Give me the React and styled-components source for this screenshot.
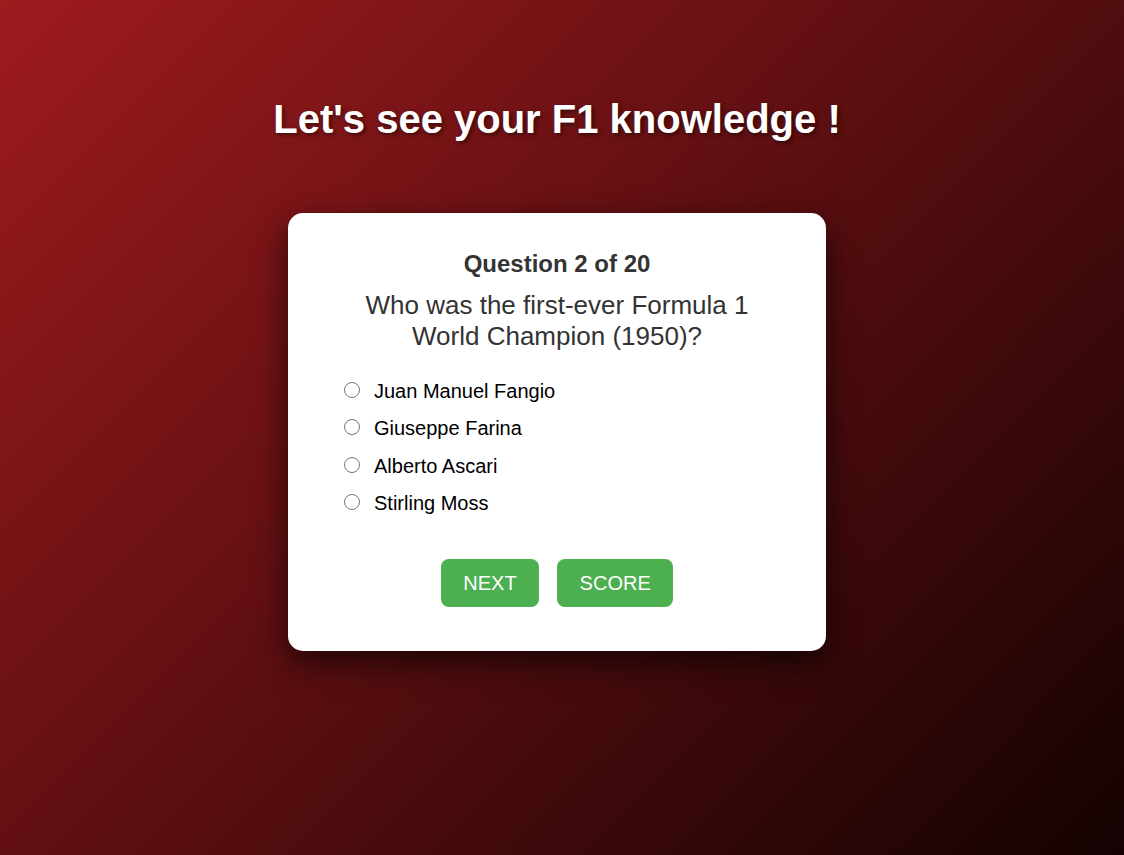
import styled, { createGlobalStyle } from "styled-components";

const GlobalStyle = createGlobalStyle`
  html, body {
    margin: 0;
    padding: 0;
  }
  body {
    font-family: "Liberation Sans", Arial, sans-serif;
  }
`;

const Page = styled.div`
  min-height: 100vh;
  box-sizing: border-box;
  padding: 97px 10px 40px 0;
  background: linear-gradient(135deg, #9e1b1e 0%, #5a0e10 50%, #140202 100%);
  display: flex;
  flex-direction: column;
  align-items: center;
`;

const Title = styled.h1`
  margin: 0 0 71px;
  color: #fff;
  font-size: 40px;
  font-weight: bold;
  text-shadow: 2px 2px 4px rgba(0, 0, 0, 0.5);
`;

const Card = styled.div`
  width: 538px;
  box-sizing: border-box;
  padding: 37px 50px 44px;
  background: #fff;
  border-radius: 15px;
  box-shadow: 0 12px 32px rgba(0, 0, 0, 0.65);
`;

const Counter = styled.h2`
  margin: 0 0 12px;
  text-align: center;
  font-size: 24px;
  font-weight: bold;
  color: #333;
`;

const Question = styled.p`
  margin: 0 0 20.5px;
  text-align: center;
  font-size: 26px;
  line-height: 31px;
  color: #333;
`;

const Options = styled.div`
  display: flex;
  flex-direction: column;
`;

const Option = styled.label`
  display: flex;
  align-items: center;
  padding: 7px 0;
  line-height: 23.5px;
  font-size: 20px;
  color: #000;
  cursor: pointer;
`;

const Radio = styled.input`
  width: 16px;
  height: 16px;
  margin: -3px 14px 0 6px;
`;

const Actions = styled.div`
  display: flex;
  justify-content: center;
  gap: 18px;
  margin-top: 36.5px;
`;

const Button = styled.button`
  padding: 12px 22.5px;
  line-height: 24px;
  font-family: inherit;
  font-size: 20px;
  color: #fff;
  background-color: #4caf50;
  border: none;
  border-radius: 8px;
  cursor: pointer;
`;

const answers = ["Juan Manuel Fangio", "Giuseppe Farina", "Alberto Ascari", "Stirling Moss"];

export default function App() {
  return (
    <>
      <GlobalStyle />
      <Page>
        <Title>Let's see your F1 knowledge !</Title>
        <Card>
          <Counter>Question 2 of 20</Counter>
          <Question>Who was the first-ever Formula 1 World Champion (1950)?</Question>
          <Options>
            {answers.map((a) => (
              <Option key={a}>
                <Radio type="radio" name="answer" value={a} />
                {a}
              </Option>
            ))}
          </Options>
          <Actions>
            <Button>NEXT</Button>
            <Button>SCORE</Button>
          </Actions>
        </Card>
      </Page>
    </>
  );
}
